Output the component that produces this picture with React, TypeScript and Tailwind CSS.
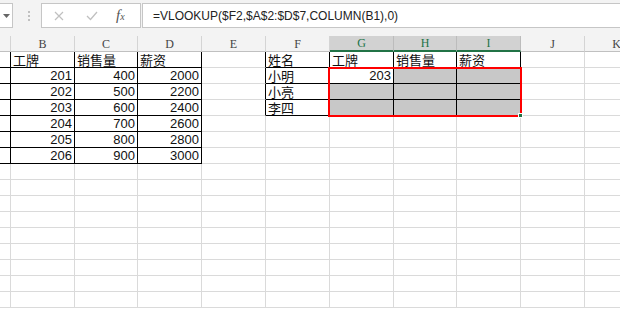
import React from "react";

const COLS = ["A", "B", "C", "D", "E", "F", "G", "H", "I", "J", "K"];
const WIDTHS = [11, 64, 63, 64, 64, 64, 64, 63, 64, 64, 64];
const ROWS = 16;

type Cell = { v: string; num?: boolean };
const data: Record<string, Cell> = {
  B1: { v: "工牌" }, C1: { v: "销售量" }, D1: { v: "薪资" },
  B2: { v: "201", num: true }, C2: { v: "400", num: true }, D2: { v: "2000", num: true },
  B3: { v: "202", num: true }, C3: { v: "500", num: true }, D3: { v: "2200", num: true },
  B4: { v: "203", num: true }, C4: { v: "600", num: true }, D4: { v: "2400", num: true },
  B5: { v: "204", num: true }, C5: { v: "700", num: true }, D5: { v: "2600", num: true },
  B6: { v: "205", num: true }, C6: { v: "800", num: true }, D6: { v: "2800", num: true },
  B7: { v: "206", num: true }, C7: { v: "900", num: true }, D7: { v: "3000", num: true },
  F1: { v: "姓名" }, G1: { v: "工牌" }, H1: { v: "销售量" }, I1: { v: "薪资" },
  F2: { v: "小明" }, F3: { v: "小亮" }, F4: { v: "李四" },
  G2: { v: "203", num: true },
};

function bordered(r: number, c: number) {
  if (r >= 1 && r <= 7 && c >= 0 && c <= 3) return true;
  if (r >= 1 && r <= 4 && c >= 5 && c <= 8) return true;
  return false;
}
function selected(r: number, c: number) {
  return r >= 2 && r <= 4 && c >= 6 && c <= 8;
}

export default function App() {
  const rows = [];
  for (let r = 1; r <= ROWS; r++) {
    const cells = [];
    for (let c = 0; c < COLS.length; c++) {
      const rb = bordered(r, c) || bordered(r, c + 1);
      const bb = bordered(r, c) || bordered(r + 1, c);
      const sel = selected(r, c) && !(r === 2 && c === 6);
      const cell = data[COLS[c] + r];
      cells.push(
        <div
          key={c}
          style={{ width: WIDTHS[c] }}
          className={
            "h-[16px] shrink-0 border-r border-b flex items-center whitespace-nowrap " +
            (rb ? "border-r-black " : "border-r-[#dadada] ") +
            (bb ? "border-b-black " : "border-b-[#dadada] ") +
            (sel ? "bg-[#c8c8c8] " : "bg-white ") +
            (cell?.num ? "justify-end pr-[2px] " : "justify-start pl-[2px] ")
          }
        >
          {cell ? (
            cell.num ? (
              <span className="text-[13px] leading-[14px] text-[#111] font-['Liberation_Sans',Arial,sans-serif]">
                {cell.v}
              </span>
            ) : (
              <span className="text-[13px] leading-[13px] text-[#111] font-['Noto_Sans_CJK_SC','Noto_Sans',sans-serif]">
                {cell.v}
              </span>
            )
          ) : null}
        </div>
      );
    }
    rows.push(
      <div key={r} className="flex">
        {cells}
      </div>
    );
  }

  return (
    <div className="w-[620px] h-[309px] overflow-hidden bg-white relative">
      {/* toolbar */}
      <div className="h-[36px] bg-[#f3f3f3] flex items-start pt-[3px]">
        <div className="w-[13px] h-[25px] bg-white border border-l-0 border-[#c6c6c6] flex items-center justify-center">
          <svg width="7" height="4" viewBox="0 0 7 4">
            <path d="M0 0 L7 0 L3.5 4 Z" fill="#666" />
          </svg>
        </div>
        <div className="ml-[15px] h-[25px] flex flex-col items-center justify-center gap-[2px]">
          <div className="w-[2px] h-[2px] bg-[#c0c0c0]" />
          <div className="w-[2px] h-[2px] bg-[#c0c0c0]" />
          <div className="w-[2px] h-[2px] bg-[#c0c0c0]" />
        </div>
        <div className="ml-[11px] w-[100px] h-[25px] bg-white border border-[#c6c6c6] flex items-center relative">
          <svg className="absolute left-[12px] top-[7px]" width="10" height="10" viewBox="0 0 10 10">
            <path d="M1 1 L9 9 M9 1 L1 9" stroke="#c0c0c0" strokeWidth="1.2" fill="none" />
          </svg>
          <svg className="absolute left-[44px] top-[7px]" width="12" height="10" viewBox="0 0 12 10">
            <path d="M1 5 L4.5 8.5 L11 1" stroke="#c0c0c0" strokeWidth="1.3" fill="none" />
          </svg>
          <span className="absolute left-[74px] top-[4px] text-[15px] italic text-[#555] font-['Liberation_Serif',serif] leading-none">
            f<span className="text-[10px]">x</span>
          </span>
        </div>
        <div className="ml-[1px] flex-1 h-[25px] bg-white border border-r-0 border-[#c6c6c6] flex items-center pl-[10px]">
          <span className="text-[12px] text-[#222] font-['Liberation_Sans',Arial,sans-serif] leading-none">
            =VLOOKUP($F2,$A$2:$D$7,COLUMN(B1),0)
          </span>
        </div>
      </div>
      {/* grid */}
      <div className="relative">
        <div className="flex">
          {COLS.map((col, c) => {
            const sel = c >= 6 && c <= 8;
            return (
              <div
                key={col}
                style={{ width: WIDTHS[c] }}
                className={
                  "h-[16px] shrink-0 border-r flex items-center justify-center text-[12px] leading-none font-['Liberation_Serif',serif] " +
                  (sel
                    ? "bg-[#d2d2d2] border-b-2 border-b-[#217346] text-[#217346] border-r-[#bcbcbc]"
                    : "bg-[#f3f3f3] border-b border-b-[#c0c0c0] text-[#444] border-r-[#d4d4d4]")
                }
              >
                {c === 0 ? "" : col}
              </div>
            );
          })}
        </div>
        {rows}
        {/* red annotation box */}
        <div className="absolute left-[328px] top-[31px] w-[194px] h-[50px] border-2 border-[#ff0000]" />
        <div className="absolute left-[518px] top-[77px] w-[5px] h-[5px] bg-[#217346] border border-white" />
      </div>
    </div>
  );
}
